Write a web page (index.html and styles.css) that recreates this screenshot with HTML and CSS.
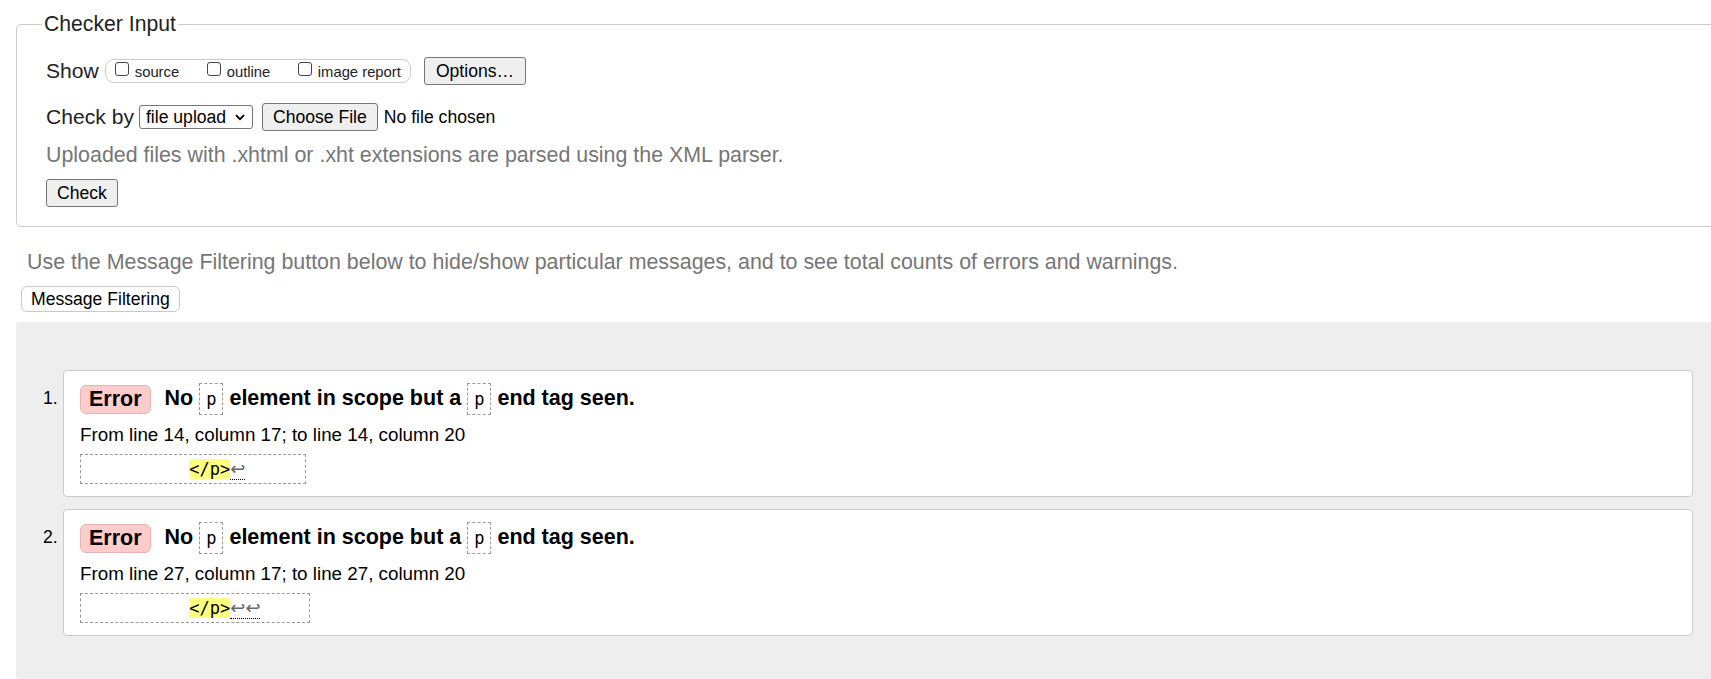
FILE: index.html
```html
<!DOCTYPE html>
<html lang="en">
<head>
<meta charset="utf-8">
<title>Nu Html Checker</title>
<link rel="stylesheet" href="styles.css">
</head>
<body>
<div class="page">
  <fieldset class="checker">
    <legend>Checker Input</legend>
    <div class="field-body">
      <div class="row">
        <span class="label show-label">Show</span>
        <span class="opts">
          <span class="opt"><span class="cb"></span><span class="opt-text">source</span></span>
          <span class="opt"><span class="cb"></span><span class="opt-text">outline</span></span>
          <span class="opt"><span class="cb"></span><span class="opt-text">image report</span></span>
        </span>
        <button class="btn options-btn" type="button">Options…</button>
      </div>
      <div class="row row-gap">
        <span class="label">Check by</span>
        <span class="select">
          <span>file upload</span>
          <svg class="chev" width="10" height="7" viewBox="0 0 10 7"><polyline points="1,1.2 5,5.2 9,1.2" fill="none" stroke="#000" stroke-width="1.8"/></svg>
        </span>
        <button class="btn" type="button">Choose File</button>
        <span class="nofile">No file chosen</span>
      </div>
      <p class="hint">Uploaded files with .xhtml or .xht extensions are parsed using the XML parser.</p>
      <button class="btn check-btn" type="button">Check</button>
    </div>
  </fieldset>

  <p class="note">Use the Message Filtering button below to hide/show particular messages, and to see total counts of errors and warnings.</p>
  <button class="filter-btn" type="button">Message Filtering</button>

  <ol class="results">
    <li class="item">
      <span class="num">1.</span>
      <div class="card">
        <p class="msg"><span class="badge">Error</span>No <code class="tag">p</code> element in scope but a <code class="tag">p</code> end tag seen.</p>
        <p class="loc">From line 14, column 17; to line 14, column 20</p>
        <code class="extract">          <b class="hl">&lt;/p&gt;</b><span class="lf">↩</span>     </code>
      </div>
    </li>
    <li class="item">
      <span class="num">2.</span>
      <div class="card">
        <p class="msg"><span class="badge">Error</span>No <code class="tag">p</code> element in scope but a <code class="tag">p</code> end tag seen.</p>
        <p class="loc">From line 27, column 17; to line 27, column 20</p>
        <code class="extract">          <b class="hl">&lt;/p&gt;</b><span class="lf">↩↩</span>    </code>
      </div>
    </li>
  </ol>
</div>
</body>
</html>
```
FILE: styles.css
```css
html, body {
  margin: 0;
  padding: 0;
  overflow: hidden;
  background: #fff;
}

body {
  font-family: "Liberation Sans", Arial, sans-serif;
  font-size: 17.6px;
  color: #000;
}

.page {
  padding-left: 16px;
  display: flex;
  flex-direction: column;
  align-items: flex-start;
}

.checker {
  align-self: stretch;
  margin: 12px -20px 0 0;
  padding: 21px 0 19px 29px;
  border: 1px solid #ccc;
  border-radius: 5px;
  min-width: 0;
}

.checker legend {
  font-size: 21.2px;
  line-height: 24px;
  padding: 0 2px;
  margin-left: -4px;
  color: #222;
}

.field-body {
  display: flex;
  flex-direction: column;
  align-items: flex-start;
}

.row {
  display: flex;
  align-items: center;
  height: 28px;
}

.row-gap {
  margin-top: 18px;
}

.label {
  font-size: 21.1px;
  line-height: 24px;
  color: #222;
  margin-right: 5px;
}

.show-label {
  margin-right: 6px;
}

.opts {
  display: flex;
  align-items: center;
  height: 24px;
  box-sizing: border-box;
  border: 1px solid #ccc;
  border-radius: 9px;
  padding: 0 9px;
  margin-right: 13px;
}

.opt {
  display: flex;
  align-items: center;
  font-size: 14.8px;
  color: #222;
}

.opt + .opt {
  margin-left: 27.5px;
}

.cb {
  width: 14px;
  height: 14px;
  box-sizing: border-box;
  border: 1px solid #444;
  border-radius: 3px;
  background: #fff;
  margin-right: 6px;
  margin-top: -5px;
}

.opt-text {
  margin-top: 2px;
}

.btn {
  font-family: "Liberation Sans", Arial, sans-serif;
  font-size: 17.6px;
  color: #000;
  height: 28px;
  box-sizing: border-box;
  padding: 0 10px;
  line-height: 26px;
  border: 1px solid #767676;
  border-radius: 3px;
  background: #efefef;
}

.options-btn {
  padding: 0 11px;
}

.select {
  display: flex;
  align-items: center;
  width: 114px;
  height: 24px;
  box-sizing: border-box;
  border: 1px solid #767676;
  border-radius: 3px;
  padding: 0 7px 0 6px;
  margin-right: 9px;
  background: #fff;
  line-height: 22px;
}

.chev {
  margin-left: auto;
  margin-top: 1px;
}

.nofile {
  margin-left: 6px;
}

.hint {
  margin: 13px 0 0;
  font-size: 21.4px;
  line-height: 22px;
  color: #767676;
}

.check-btn {
  margin-top: 13px;
}

.note {
  margin: 24px 0 0 11px;
  font-size: 21.4px;
  line-height: 22px;
  color: #767676;
}

.filter-btn {
  margin: 13px 0 0 5px;
  font-family: "Liberation Sans", Arial, sans-serif;
  font-size: 17.6px;
  color: #000;
  height: 26px;
  box-sizing: border-box;
  padding: 0 9px;
  line-height: 24px;
  border: 1px solid #c8c8c8;
  border-radius: 6px;
  background: #fff;
}

.results {
  align-self: stretch;
  margin: 10px -20px 0 0;
  padding: 48px 38px 43px 0;
  list-style: none;
  background: #eee;
  border-radius: 4px;
  display: flex;
  flex-direction: column;
  gap: 12px;
}

.item {
  display: flex;
}

.num {
  width: 47px;
  flex: none;
  box-sizing: border-box;
  padding: 12px 0 0 27px;
  line-height: 32px;
  font-size: 17.6px;
}

.card {
  flex: 1;
  background: #fff;
  border: 1px solid #ccc;
  border-radius: 4px;
  padding: 11px 16px 12px;
  display: flex;
  flex-direction: column;
  align-items: flex-start;
}

.msg {
  margin: 0;
  height: 32px;
  line-height: 32px;
  font-size: 21.5px;
  font-weight: bold;
  white-space: nowrap;
}

.badge {
  display: inline-block;
  vertical-align: middle;
  line-height: 27px;
  padding: 0 8px;
  border: 1px solid #e3b4b4;
  background: #fcc;
  border-radius: 6px;
  margin-right: 14px;
}

.tag {
  display: inline-block;
  vertical-align: middle;
  font-family: "DejaVu Sans Mono", monospace;
  font-size: 17px;
  font-weight: normal;
  line-height: 30px;
  height: 30px;
  padding: 0 6px;
  border: 1px dashed #999;
}

.loc {
  margin: 10px 0 0;
  font-size: 18.8px;
  line-height: 21px;
}

.extract {
  margin-top: 9px;
  border: 1px dashed #999;
  padding: 3px 8px 3px 6px;
  font-family: "DejaVu Sans Mono", monospace;
  font-size: 17px;
  line-height: 21px;
  white-space: pre;
}

.hl {
  font-weight: normal;
  background: #ffff80;
}

.lf {
  font-family: "DejaVu Sans", sans-serif;
  font-size: 18px;
  color: #666;
  border-bottom: 1px dotted #000;
}
```
